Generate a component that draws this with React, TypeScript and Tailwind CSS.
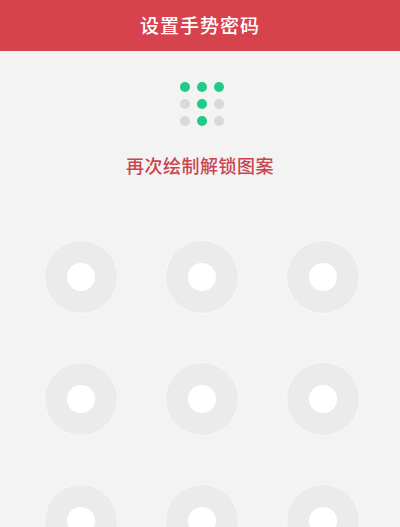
const mini = [true, true, true, false, true, false, false, true, false];

export default function App() {
  return (
    <div
      className="flex h-[527px] w-[400px] flex-col overflow-hidden bg-[#f3f3f3]"
      style={{ fontFamily: '"Noto Sans CJK SC", "Noto Sans", sans-serif' }}
    >
      <header className="flex h-[51px] shrink-0 items-center justify-center bg-[#d6434d]">
        <h1 className="text-[19px] font-medium tracking-[1px] text-white">设置手势密码</h1>
      </header>

      <div className="mt-[31px] flex justify-center pl-[3px]">
        <div className="grid grid-cols-3 gap-x-[7px] gap-y-[7px]">
          {mini.map((on, i) => (
            <span
              key={i}
              className={`h-[10px] w-[10px] rounded-full ${on ? "bg-[#1fcb86]" : "bg-[#d9d9db]"}`}
            />
          ))}
        </div>
      </div>

      <p className="mt-[27px] text-center text-[18px] leading-[24px] font-medium tracking-[0.5px] text-[#c9454f]">
        再次绘制解锁图案
      </p>

      <div className="mt-[63px] flex justify-center">
        <div className="grid grid-cols-3 gap-x-[47px] gap-y-[48px] pl-[4px]">
          {Array.from({ length: 9 }).map((_, i) => (
            <div
              key={i}
              className="flex h-[74px] w-[74px] items-center justify-center rounded-full border border-[#f8f8f8] bg-[#ebebeb]"
            >
              <div className="h-[28px] w-[28px] rounded-full bg-white" />
            </div>
          ))}
        </div>
      </div>
    </div>
  );
}
